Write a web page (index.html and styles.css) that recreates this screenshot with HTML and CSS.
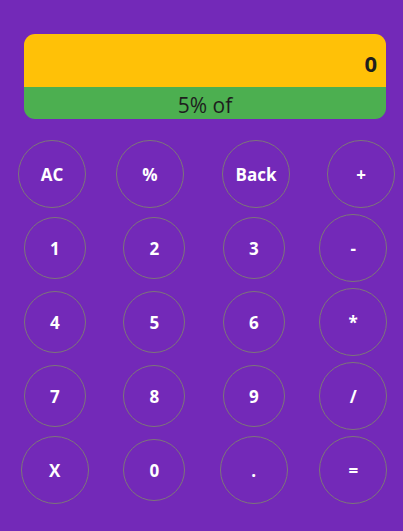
FILE: index.html
```html
<!DOCTYPE html>
<html>
<head>
<meta charset="utf-8">
<link rel="stylesheet" href="styles.css">
</head>
<body>
<div class="calc">
  <div class="display">
    <div class="result">0</div>
    <div class="expr">5% of</div>
  </div>
  <div class="keys">
    <div class="row row-top">
      <button class="key big">AC</button>
      <button class="key big">%</button>
      <button class="key big">Back</button>
      <button class="key big">+</button>
    </div>
    <div class="row">
      <div class="cell"><button class="key">1</button></div>
      <div class="cell"><button class="key">2</button></div>
      <div class="cell"><button class="key">3</button></div>
      <div class="cell"><button class="key big">-</button></div>
    </div>
    <div class="row">
      <div class="cell"><button class="key">4</button></div>
      <div class="cell"><button class="key">5</button></div>
      <div class="cell"><button class="key">6</button></div>
      <div class="cell"><button class="key big">*</button></div>
    </div>
    <div class="row">
      <div class="cell"><button class="key">7</button></div>
      <div class="cell"><button class="key">8</button></div>
      <div class="cell"><button class="key">9</button></div>
      <div class="cell"><button class="key big">/</button></div>
    </div>
    <div class="row">
      <div class="cell"><button class="key big">X</button></div>
      <div class="cell"><button class="key">0</button></div>
      <div class="cell"><button class="key big">.</button></div>
      <div class="cell"><button class="key big">=</button></div>
    </div>
  </div>
</div>
</body>
</html>
```
FILE: styles.css
```css
html, body {
  margin: 0;
  padding: 0;
  background: #7329b8;
  font-family: "Open Sans", "Noto Sans", sans-serif;
}
.calc {
  width: 403px;
  height: 531px;
  padding-top: 34px;
  box-sizing: border-box;
}
.display {
  margin: 0 17px 0 24px;
  border-radius: 11px;
  overflow: hidden;
}
.result {
  background: #ffc107;
  height: 53px;
  text-align: right;
  padding-right: 9px;
  font-size: 22px;
  font-weight: 700;
  color: #1e1e1e;
  line-height: 58px;
  box-sizing: border-box;
}
.expr {
  background: #4caf50;
  height: 32px;
  text-align: center;
  font-size: 21px;
  color: #1e1e1e;
  line-height: 36px;
}
.keys {
  margin-top: 18px;
}
.row {
  display: flex;
  height: 74px;
  align-items: center;
  padding-left: 5px;
}
.row-top {
  padding-left: 18px;
}
.row-top .key:nth-child(2) { margin-left: 30px; }
.row-top .key:nth-child(3) { margin-left: 38px; }
.row-top .key:nth-child(4) { margin-left: 37px; }
.cell {
  width: 100px;
  display: flex;
  justify-content: center;
  align-items: center;
}
.key {
  width: 62px;
  height: 62px;
  border-radius: 50%;
  border: 1px solid #7d7579;
  background: transparent;
  color: #ffffff;
  font-family: "Open Sans", "Noto Sans", sans-serif;
  font-size: 17px;
  font-weight: 700;
  padding: 0;
  box-sizing: border-box;
  display: flex;
  align-items: center;
  justify-content: center;
}
.key.big {
  width: 68px;
  height: 68px;
  flex: none;
}
```
